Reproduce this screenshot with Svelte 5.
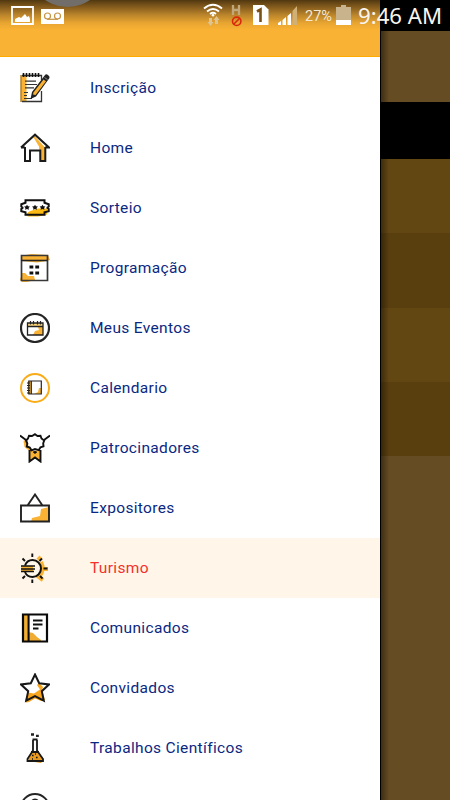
<script>
  // Every icon is a list of [style, path, colour, stroke width] on a 30 x 30 grid.
  const orange = '#f9b233';
  const ring = 'M15 1a14 14 0 1 0 0 28a14 14 0 1 0 0-28z';

  const items = [
    { label: 'Inscrição', icon: [
      ['fill', 'M0.500 2h6v27h-6z', orange],
      ['line', 'M2 28.500h19.500V18M21.500 7V2.500H2', '#333', 1.3],
      ['line', 'M1 2v27', '#8a682c', 1],
      ['line', 'M3.500 0v4M6.500 0v4M9.500 0v4M12.500 0v4M15.500 0v4M18.500 0v4', '#111', 1.6],
      ['line', 'M5 8.200h11M5 11.500h12M5 14.800h9M4 19.500h4M4 22.500h3M4 25.500h8', '#333', 1.2],
      ['fill', 'M10.500 26l1.500-7L25 2q1-1.500 3 0t1.500 3L16 23.500z', '#222'],
      ['fill', 'M13 21.500l.5-2L23.500 6.500l2.500 1.800L15.500 22z', orange],
      ['line', 'M24.500 4.500l3 2', '#999', 0.8]
    ] },
    { label: 'Home', icon: [
      ['fill', 'M13 3.500l6 10 1 14h5V14.500L15 3.500z', orange],
      ['fill', 'M12 6l6 8-1 3H10V9z', '#fff'],
      ['line', 'M5 14v14h5V17.500h10.300V28h5V14M1 14.500L15 1.700l14 12.800h-4M1 14.500h4', '#1b1b1b', 2]
    ] },
    { label: 'Sorteio', icon: [
      ['fill', 'M6 21.500l3-3 9-3h9v6l-9 2H8z', '#fdb913'],
      ['line', 'M5.500 7.200h19v2.500l4.200 1.500v2.300l-1.200 1v.5l1.200 1v2.300l-4.200 1v2.500h-19v-2.500l-4.200-1V16l1.200-1v-.5l-1.200-1v-2.300l4.200-1.500z', '#111', 2],
      ['fill', 'M7 11.700l1 1.600 1.900.2-1.300 1.400.3 1.900-1.900-.9-1.900.9.3-1.900-1.300-1.400 1.900-.2zM15 11.700l1 1.600 1.900.2-1.300 1.400.3 1.900-1.900-.9-1.900.9.3-1.900-1.300-1.400 1.900-.2zM22.500 11.700l1 1.600 1.900.2-1.300 1.400.3 1.900-1.900-.9-1.900.9.3-1.900-1.300-1.400 1.900-.2z', '#111']
    ] },
    { label: 'Programação', icon: [
      ['fill', 'M1 3l10-2 17 1 2 5-4 1-9 1.500L2 8zM0 27l2-7h3l3 3h6l1 4-8 2H2z', orange],
      ['line', 'M1.500 2.500h26v25h-26z', '#383838', 1.7],
      ['line', 'M1 7.500h26.500', '#222', 1.6],
      ['line', 'M9.500 14h3.800M15.300 14h3.800M9.500 20h3.800M15.300 20h3.800', '#111', 3]
    ] },
    { label: 'Meus Eventos', icon: [
      ['line', ring, '#252525', 2.2],
      ['fill', 'M13 22l2-4 4-1-1-3h5v8z', orange],
      ['fill', 'M8 10h15v3H8z', '#ffd980'],
      ['line', 'M7.500 10h15.500v12H7.500zM7.500 13.500h15.500', '#222', 1.3],
      ['line', 'M10.500 8v3.500M13.500 8v3.500M17.500 8v3.500M20.500 8v3.500', '#222', 1.2]
    ] },
    { label: 'Calendario', icon: [
      ['line', ring, '#f9ac18', 2],
      ['fill', 'M8 8h3v13H8zM14 21l4-2 1-4h2v6z', orange],
      ['line', 'M8.800 8h12.500v13H8.800zM11.300 8v13', '#252525', 1.2],
      ['line', 'M7 10h3M7 12.500h3M7 15h3M7 17.500h3M7 20h3', '#252525', 1.1]
    ] },
    { label: 'Patrocinadores', icon: [
      ['fill', 'M3.500 8l4-2 1 8 5 4 7-1v11l-5.500-3-5.500 3V18l-5-4z', orange],
      ['line', 'M0 2.500l6 4.500M30 2.500l-6 4.500', '#111', 1.8],
      ['fill', 'M15 2l3 1 3 0 1 3 2 2-1 3 0 3-3 1-2 2-3-1-3 1-3-5-1-4 1-4 3-1z', '#fff'],
      ['line', 'M15 1.200l2.500 1.800 3-.3 1 2.800 2.700 2-1 2.800.3 3-3 1-1.700 2.800-3.800-1-3.500 1.200-1.700-2.800-3-1 .5-3-1.300-2.800L8 5.500l1-2.800 3 .3zM9.500 17v11.500l5.500-4 5.500 4V17M13.500 18.500l1.500 1.300 1.500-1.300', '#111', 1.9]
    ] },
    { label: 'Expositores', icon: [
      ['fill', 'M11 29l1-4 8-2 1-7 8-2v15z', orange],
      ['line', 'M1 12.500h28v16H1zM7.500 12.500L15 1.500l7.500 11', '#222', 1.9]
    ] },
    { label: 'Turismo', active: true, icon: [
      ['fill', 'M1 13h12v6H1z', orange],
      ['line', 'M18 7l3-3M21 9q4 8-2 15l4 3M22 16h6', orange, 4.2],
      ['fill', 'M13 8a8 8 0 0 1 0 15L7 19h10v-6H7z', '#fff7ea'],
      ['line', 'M5 12.500Q7 7 12.500 7a8.500 8.500 0 0 1 0 17Q7 24 5 19', '#111', 2],
      ['line', 'M1 13h14M1 16h14M1 18.500h13', '#111', 1.3],
      ['line', 'M12.300 0.500v3.500M12.300 26.500v3.500M2.500 5.500l2.500 2.500M22 5.500l-2.500 2.500M2.500 25.500l2.500-2.500M22.500 25.500l-2.500-2.500M23.500 15.500h4', '#111', 1.9]
    ] },
    { label: 'Comunicados', icon: [
      ['fill', 'M3 1h4v27H3zM8 19l5 1 4 4 4 3v2H8z', '#f0ac33'],
      ['line', 'M3 1.500h24v27H3zM8.500 2v26', '#090909', 2.2],
      ['line', 'M13 7.500h9.500M13 11.500h9.500M13 15.500h5.500', '#111', 1.8]
    ] },
    { label: 'Convidados', icon: [
      ['fill', 'M17 12l2-2 4 4-1 3 3 10-4 1-6-2.500-6 3.500-3 .5-1-2 3-8 6 1 6-4z', '#f9a61f'],
      ['line', 'M15 1.500l4.200 8.800 9.800 1.200-7.200 6.700 2 9.500-8.800-4.500-8.800 4.500 2-9.500L1 11.500l9.800-1.200z', '#181818', 2]
    ] },
    { label: 'Trabalhos Científicos', icon: [
      ['fill', 'M11 20h8l5 7-3 3-13-2z', '#e89b20'],
      ['line', 'M12.500 6.500h5M13 7v10.500L7.500 26v2H23v-2l-6-8.500V7M11 19h8', '#181818', 1.8],
      ['line', 'M12 22.500h1.600M16 24.500h1.600M12 26h1M15 21h1', '#181818', 1.4],
      ['line', 'M11 1.500h3M16 2.800h2.800', '#222', 2.3]
    ] },
    { label: '', icon: [
      ['line', ring, '#252525', 2],
      ['fill', 'M15 5.500a4 4 0 0 1 4 4l-4 4-4-4a4 4 0 0 1 4-4z', '#252525']
    ] }
  ];
</script>

<div class="screen">
  <nav class="drawer">
    <header></header>
    {#each items as item}
      <div class="row" class:active={item.active}>
        <svg width="30" height="30" viewBox="0 0 30 30" aria-hidden="true">
          {#each item.icon as [kind, d, color, width]}
            {#if kind === 'fill'}
              <path {d} fill={color} />
            {:else}
              <path {d} fill="none" stroke={color} stroke-width={width} />
            {/if}
          {/each}
        </svg>
        <span>{item.label}</span>
      </div>
    {/each}
  </nav>

  <main class="page">
    <div class="top"></div>
    <div class="hero"></div>
    <div class="bar"></div>
    <div class="band"></div>
    <div class="band dark"></div>
    <div class="band"></div>
    <div class="band dark"></div>
    <div class="rest"></div>
  </main>

  <div class="status">
    <div class="bubble"></div>
    <svg class="glyphs" width="350" height="30" viewBox="0 0 350 30" aria-hidden="true">
      <path d="M12 7h21v17H12z" fill="none" stroke="#fff" stroke-width="1.800" />
      <path d="M15 22v-3l4-2 2 1 4-4 2 3 2-1 1 3v3z" fill="#fff" />
      <path d="M41 9h23v15H41z" fill="#fff" />
      <g fill="none" stroke="#c69543" stroke-width="1.200">
        <circle cx="47.500" cy="16" r="3" /><circle cx="57.500" cy="16" r="3" /><path d="M47 19.300h11" />
      </g>
      <g fill="none" stroke="#fff" stroke-width="1.900">
        <path d="M204 8.500q9-7.500 18 0M207 11.500q6-5 12 0M210 14q3-2.300 6 0" />
      </g>
      <circle cx="213" cy="15.300" r="1.300" fill="#fff" />
      <path d="M209 18h3v4h1.500L210.500 26 207.500 22H209zM215 24h3v-4h1.500L216.500 16 213.500 20H215z" fill="#dfc391" />
      <path d="M233 5v10M239 5v10M233 10h6" fill="none" stroke="#c2a77b" stroke-width="2.300" />
      <g fill="none" stroke="#d8290b" stroke-width="1.600"><circle cx="236.700" cy="21.300" r="4.200" /><path d="M233.700 24.300l6-6" /></g>
      <path d="M253 5h11l4.500 4.500V25H253z" fill="#fff" />
      <path d="M257 11.500l3.500-2V22" fill="none" stroke="#795018" stroke-width="2.600" />
      <path d="M278 25v-2l3-2v4zM282.500 25v-5l3.500-3v8zM287.500 25v-9l3.500-3v12z" fill="#fff" />
      <path d="M292.500 25V11l4.500-5v19z" fill="#d1b078" />
    </svg>
    <span class="percent">27%</span>
    <svg class="battery" width="15" height="20" viewBox="0 0 15 20" aria-hidden="true">
      <path d="M0 2h5V0h5v2h5v13H0z" fill="#c9b38d" /><path d="M0 15h15v5H0z" fill="#fff" />
    </svg>
    <span class="clock">9:46 AM</span>
  </div>
</div>

<style>
  :global(body) { margin: 0; overflow: hidden; }
  .screen { position: relative; display: flex; width: 450px; height: 800px; overflow: hidden; font-family: Roboto, sans-serif; }
  .drawer { width: 380px; flex: none; background: #fff; }
  header {
    box-sizing: border-box; height: 57px; margin-bottom: 1px; border-bottom: 1px solid #ffab00;
    background: linear-gradient(#513810 0, #76511a 5px, #bb852b 15px, #e8a531 23px, #f9b233 30px);
  }
  .row { box-sizing: border-box; height: 60px; padding-left: 20px; display: flex; align-items: center; gap: 40px; }
  .row svg { flex: none; }
  .row span { color: #0a2882; font-size: 15.500px; line-height: 20px; letter-spacing: 0.340px; white-space: nowrap; }
  .active { background: #fff6e9; }
  .row.active span { color: #f5302c; }
  .page { position: relative; flex: 1; display: flex; flex-direction: column; border-left: 1px solid #000; }
  .page::after { content: ''; position: absolute; inset: 31px auto 0 0; width: 8px; background: linear-gradient(90deg, rgba(0,0,0,.4), transparent); }
  .top { height: 31px; background: #000; }
  .hero { height: 71px; background: #654c22; }
  .bar { height: 57px; background: #000; }
  .band { height: 74.300px; background: #634713; }
  .dark { background: #593f0e; }
  .rest { flex: 1; background: #654c22; }
  .status { position: absolute; inset: 0 0 auto 0; height: 31px; overflow: hidden; }
  .bubble { position: absolute; left: 28px; top: -72px; width: 79px; height: 79px; border-radius: 50%; background: #716d69; }
  .glyphs { position: absolute; left: 0; top: 0; }
  .percent { position: absolute; left: 305px; top: 7px; color: #f3e8d5; font-size: 14.500px; line-height: 19px; }
  .battery { position: absolute; left: 336px; top: 5px; }
  .clock { position: absolute; left: 358px; top: 0; color: #f8f5ef; font: 22.200px/31px 'Noto Sans', sans-serif; white-space: nowrap; }
</style>
